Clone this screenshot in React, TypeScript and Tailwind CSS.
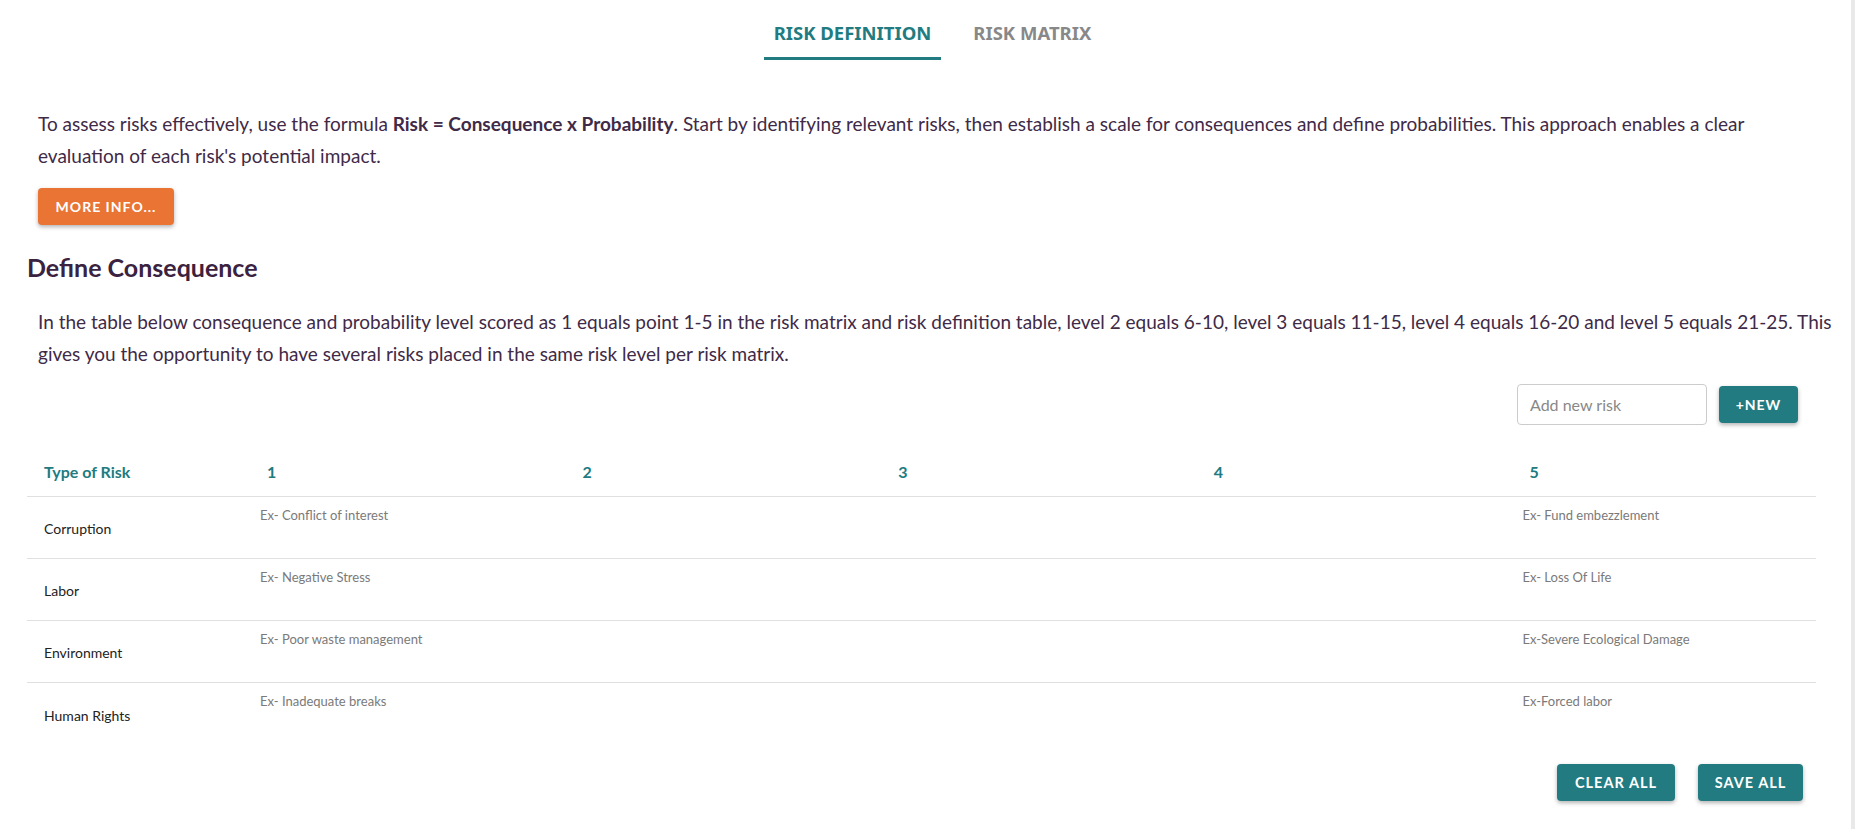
import React from "react";

const rows = [
  { name: "Corruption", c1: "Ex- Conflict of interest", c5: "Ex- Fund embezzlement" },
  { name: "Labor", c1: "Ex- Negative Stress", c5: "Ex- Loss Of Life" },
  { name: "Environment", c1: "Ex- Poor waste management", c5: "Ex-Severe Ecological Damage" },
  { name: "Human Rights", c1: "Ex- Inadequate breaks", c5: "Ex-Forced labor" },
];

export default function App() {
  return (
    <div className="flex w-full min-h-[829px] bg-white" style={{ fontFamily: "Lato, 'Noto Sans', sans-serif" }}>
      <div className="flex-1 flex flex-col pl-[27px] pr-[35px]">
        {/* Tabs */}
        <div className="flex justify-center pl-[22px] gap-[22px]">
          <div className="px-[10px] pt-[20px] pb-[11px] border-b-[3px] border-[#217b80] text-[18.5px] leading-[26px] font-bold text-[#217b80]" style={{ fontFamily: "'Noto Sans', sans-serif" }}>
            RISK DEFINITION
          </div>
          <div className="px-[10px] pt-[20px] pb-[11px] border-b-[3px] border-transparent text-[18.5px] leading-[26px] font-bold text-[#888888]" style={{ fontFamily: "'Noto Sans', sans-serif" }}>
            RISK MATRIX
          </div>
        </div>

        <p className="mt-[48px] pl-[11px] -mr-[12px] text-[19px] leading-[32px] text-[#3f2a47]">
          To assess risks effectively, use the formula <b className="font-bold">Risk = Consequence x Probability</b>. Start by identifying relevant risks, then establish a scale for consequences and define probabilities. This approach enables a clear evaluation of each risk's potential impact.
        </p>

        <div className="pl-[11px] mt-[16px]">
          <button className="h-[37px] w-[136px] rounded-[4px] bg-[#ea7434] text-white text-[14px] font-bold tracking-[1px] shadow-[0_2px_4px_rgba(0,0,0,0.3)]">
            MORE INFO...
          </button>
        </div>

        <h2 className="mt-[26px] text-[25px] leading-[32px] font-bold text-[#3a2240]">Define Consequence</h2>

        <p className="mt-[23px] pl-[11px] -mr-[30px] text-[19px] leading-[32px] text-[#3f2a47]">
          In the table below consequence and probability level scored as 1 equals point 1-5 in the risk matrix and risk definition table, level 2 equals 6-10, level 3 equals 11-15, level 4 equals 16-20 and level 5 equals 21-25. This gives you the opportunity to have several risks placed in the same risk level per risk matrix.
        </p>

        <div className="mt-[14px] flex justify-end items-center gap-[12px] pr-[18px]">
          <input
            placeholder="Add new risk"
            className="h-[41px] w-[190px] rounded-[4px] border border-[#cccccc] px-[12px] text-[16px] text-[#333] placeholder:text-[#888] outline-none"
          />
          <button className="h-[37px] w-[79px] rounded-[4px] bg-[#217b80] text-white text-[14px] font-bold tracking-[1px] shadow-[0_2px_4px_rgba(0,0,0,0.3)]">
            +NEW
          </button>
        </div>

        {/* Table */}
        <div className="mt-[22px]">
          <div className="grid grid-cols-[211px_repeat(5,1fr)] h-[50px] items-center border-b border-[#e0e0e0] text-[16px] font-bold text-[#217b80]">
            <div className="pl-[17px]">Type of Risk</div>
            {[1, 2, 3, 4, 5].map((n) => (
              <div key={n} className="pl-[29px]">{n}</div>
            ))}
          </div>
          {rows.map((r, i) => (
            <div
              key={r.name}
              className={`grid grid-cols-[211px_repeat(5,1fr)] h-[62px] ${i < rows.length - 1 ? "border-b border-[#e0e0e0]" : ""}`}
            >
              <div className="pl-[17px] flex items-center pt-[2px] text-[14px] text-[#222]">{r.name}</div>
              <div className="pl-[22px] pt-[9px] text-[13px] text-[#7a7a7a]">{r.c1}</div>
              <div />
              <div />
              <div />
              <div className="pl-[22px] pt-[9px] text-[13px] text-[#7a7a7a]">{r.c5}</div>
            </div>
          ))}
        </div>

        <div className="mt-[19px] flex justify-end gap-[23px] pr-[13px]">
          <button className="h-[37px] w-[118px] rounded-[4px] bg-[#217b80] text-white text-[14.5px] font-bold tracking-[1px] shadow-[0_2px_4px_rgba(0,0,0,0.3)]">
            CLEAR ALL
          </button>
          <button className="h-[37px] w-[105px] rounded-[4px] bg-[#217b80] text-white text-[14.5px] font-bold tracking-[1px] shadow-[0_2px_4px_rgba(0,0,0,0.3)]">
            SAVE ALL
          </button>
        </div>
      </div>
      <div className="w-[4px] bg-[#e9e9e9]" />
    </div>
  );
}
